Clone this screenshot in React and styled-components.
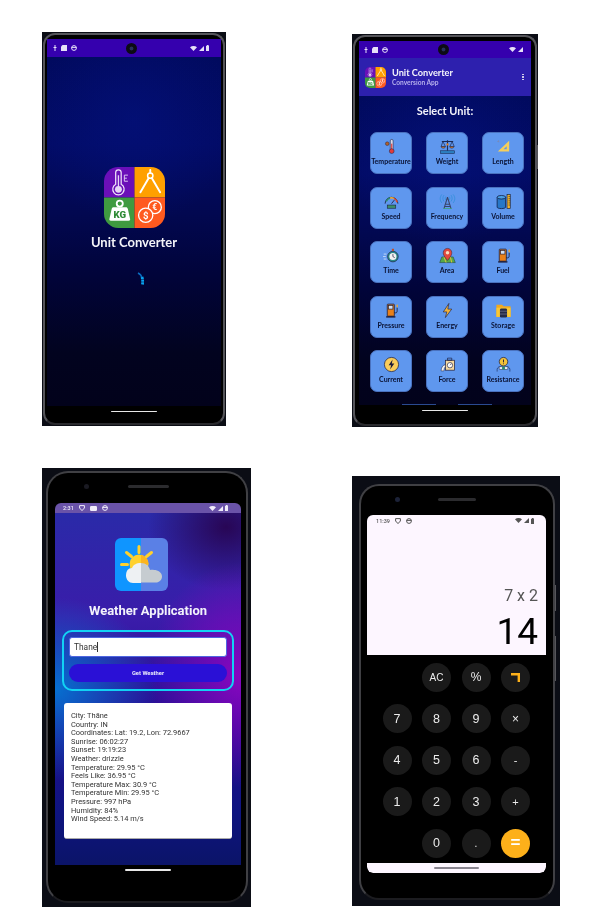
import React from 'react';
import styled, { createGlobalStyle } from 'styled-components';

const Global = createGlobalStyle`
  html, body { margin: 0; padding: 0; background: #fff; }
  * { box-sizing: border-box; }
`;

const Page = styled.main`
  width: 609px;
  height: 921px;
  overflow: hidden;
  display: grid;
  grid-template-columns: 310px 208px;
  grid-template-rows: 394px 439px;
  row-gap: 42px;
  padding: 32px 0 0 42px;
  align-items: start;
`;

const Shot = styled.section`
  width: ${p => p.$w}px;
  height: ${p => p.$h}px;
  margin-top: ${p => p.$top || 0}px;
  padding: ${p => p.$pad};
  background: #0b0d15;
  filter: blur(0.4px);
`;

const Bezel = styled.div`
  position: relative;
  height: 100%;
  background: #000;
  border: 2px solid ${p => p.$edge};
  border-bottom-color: ${p => p.$foot};
  border-radius: ${p => p.$radius}px;
  padding: ${p => p.$inner};
  display: flex;
  flex-direction: column;
`;

const SideKey = styled.span`
  position: absolute;
  right: -3px;
  top: ${p => p.$y}px;
  width: 1px;
  height: ${p => p.$h}px;
  background: #55555a;
`;

const Screen = styled.div`
  flex: 1;
  min-height: 0;
  display: flex;
  flex-direction: column;
  border-radius: ${p => p.$radius || 0}px;
  overflow: hidden;
`;

const Status = styled.div`
  flex: none;
  height: ${p => p.$h}px;
  background: ${p => p.$bg};
  color: ${p => p.$fg};
  padding: 0 ${p => p.$right}px 0 ${p => p.$left}px;
  display: flex;
  align-items: center;
  font: 500 5.5px Roboto, sans-serif;
`;

const StatusGroup = styled.div`
  flex: 1;
  display: flex;
  align-items: center;
  gap: ${p => p.$gap || 4}px;
  justify-content: ${p => (p.$end ? 'flex-end' : 'flex-start')};
`;

const PunchHole = styled.span`
  flex: none;
  width: 11px;
  height: 11px;
  border-radius: 50%;
  background: radial-gradient(circle, #27305c 0 18%, #0b0b14 30% 100%);
`;

const Nav = styled.div`
  flex: none;
  height: ${p => p.$h}px;
  background: ${p => p.$bg || '#000'};
  display: flex;
  justify-content: center;
  align-items: center;
`;

const HomeBar = styled.span`
  width: ${p => p.$w}px;
  height: 1.5px;
  border-radius: 1px;
  background: ${p => p.$color || '#e8e8e8'};
`;

const NightBg = styled.div`
  flex: 1;
  min-height: 0;
  display: flex;
  flex-direction: column;
  background:
    radial-gradient(ellipse 60% 30% at 50% 18%, #04128090, transparent),
    linear-gradient(180deg, #010a5e 0%, #020b66 25%, #020850 45%, #01043a 62%, #02031f 85%, #02021b 100%);
`;

const Splash = styled(NightBg)`
  align-items: center;
  padding-top: 110px;
`;

const SplashTitle = styled.h1`
  margin: 6px 0 0;
  font: 700 13px/16px Lato, sans-serif;
  color: #f4f4f8;
`;

const Spinner = styled.svg`
  margin: 22px 0 0 14px;
`;

const AppBar = styled.header`
  flex: none;
  height: 38px;
  background: #2d20ae;
  padding: 0 7px 0 6px;
  display: flex;
  align-items: center;
  gap: 6px;
`;

const BarTitles = styled.div`
  flex: 1;
  display: flex;
  flex-direction: column;
`;

const BarTitle = styled.span`
  font: 700 9.2px/11px Lato, sans-serif;
  color: #f5f5fb;
`;

const BarSub = styled.span`
  font: 700 6.6px/9px Lato, sans-serif;
  color: #b6b0ec;
`;

const Dots = styled.span`
  display: flex;
  flex-direction: column;
  gap: 1px;
  & > i { width: 1.6px; height: 1.6px; border-radius: 50%; background: #e8e8f4; display: block; }
`;

const SelectTitle = styled.h2`
  margin: 8px 0 14px;
  text-align: center;
  font: 700 11px/14px Lato, sans-serif;
  color: #f4f4fb;
`;

const UnitGrid = styled.div`
  display: grid;
  grid-template-columns: repeat(3, 42px);
  grid-auto-rows: 42px;
  column-gap: 14px;
  row-gap: 12.5px;
  padding-left: 11px;
`;

const UnitCard = styled.div`
  background: #5f97ee;
  border: 1px solid #4a72bf;
  border-radius: 7px;
  padding-top: 5px;
  display: flex;
  flex-direction: column;
  align-items: center;
`;

const UnitLabel = styled.span`
  margin-top: 2px;
  font: 700 7px/8px Lato, sans-serif;
  color: #0a1233;
  white-space: nowrap;
`;

const Peeks = styled.div`
  margin-top: 12px;
  padding-left: 43px;
  display: flex;
  gap: 22px;
  & > i { display: block; width: 34px; height: 1px; background: #2a4a90; }
`;

const Head = styled.div`
  flex: none;
  height: ${p => p.$h}px;
  display: flex;
  align-items: center;
  padding-bottom: ${p => p.$drop}px;
  padding-left: ${p => p.$left}px;
`;

const Lens = styled.span`
  width: 5px;
  height: 5px;
  border-radius: 50%;
  background: ${p => p.$color};
`;

const Speaker = styled.span`
  margin-left: ${p => p.$gap}px;
  width: ${p => p.$w}px;
  height: 3px;
  border-radius: 1.5px;
  background: #2b2b2e;
`;

const WeatherBg = styled.div`
  flex: 1;
  min-height: 0;
  display: flex;
  flex-direction: column;
  align-items: center;
  padding-top: 25px;
  background:
    radial-gradient(ellipse 55% 26% at 0% 50%, #0670d0 0%, #0670d000 100%),
    radial-gradient(ellipse 50% 32% at 100% 46%, #8a05c0 0%, #8a05c000 100%),
    radial-gradient(ellipse 42% 18% at 92% 4%, #280655 0%, #28065500 100%),
    linear-gradient(180deg, #2a2aa8 0%, #3a1caa 30%, #240c90 60%, #0e1480 85%, #0b1468 100%);
`;

const WeatherIcon = styled.svg`
  align-self: flex-start;
  margin-left: 60px;
`;

const WeatherTitle = styled.h1`
  margin: 12px 0 11px;
  font: 700 13px/16px Roboto, sans-serif;
  color: #f2f2fb;
`;

const SearchBox = styled.div`
  width: 172px;
  height: 61px;
  border: 2px solid #12d2f4;
  border-radius: 10px;
  padding: 5px 5px 0;
  display: flex;
  flex-direction: column;
  gap: 7px;
`;

const CityInput = styled.div`
  height: 20px;
  background: #fff;
  border: 1px solid #4f66e0;
  border-radius: 3px;
  padding-left: 4px;
  display: flex;
  align-items: center;
  font: 400 8.4px Roboto, sans-serif;
  color: #333;
`;

const Caret = styled.span`
  width: 0.7px;
  height: 10px;
  background: #333;
`;

const WeatherButton = styled.div`
  height: 18px;
  background: #2a10d6;
  border-radius: 9px;
  display: flex;
  align-items: center;
  justify-content: center;
  font: 700 5.8px Roboto, sans-serif;
  color: #e8e8fb;
`;

const ResultCard = styled.div`
  width: 168px;
  height: 136px;
  margin-top: 12px;
  background: #fff;
  border-radius: 3px;
  border-bottom: 1px solid #aaa;
  padding: 9px 7px;
  font: 400 7.45px/8.6px Roboto, sans-serif;
  color: #333;
`;

const ResultLine = styled.div`
  white-space: nowrap;
`;

const Display = styled.div`
  flex: none;
  height: 140px;
  background: #fdf6ff;
  display: flex;
  flex-direction: column;
`;

const DisplayBody = styled.div`
  flex: 1;
  display: flex;
  flex-direction: column;
  justify-content: flex-end;
  align-items: flex-end;
  padding: 0 8px 5px 0;
  font-family: Roboto, sans-serif;
`;

const Expression = styled.div`
  font-size: 16px;
  line-height: 18px;
  color: #555;
`;

const Result = styled.div`
  margin-top: 8px;
  font-size: 37px;
  line-height: 37px;
  color: #000;
`;

const Keypad = styled.div`
  flex: none;
  height: 208px;
  background: #000;
  padding: 7.5px 0 0 15.5px;
  display: grid;
  grid-template-columns: repeat(4, 29px);
  grid-auto-rows: 29px;
  column-gap: 10.5px;
  row-gap: 12.5px;
`;

const Key = styled.div`
  grid-column: ${p => p.$col || 'auto'};
  border-radius: 50%;
  background: ${p => (p.$accent ? '#fdb01a' : '#1a1a1a')};
  color: ${p => (p.$accent ? '#fff' : '#ececec')};
  display: flex;
  align-items: center;
  justify-content: center;
  font: ${p => (p.$bold ? 700 : 400)} ${p => p.$size || 12.5}px "Liberation Sans", sans-serif;
`;

const CalcNav = styled(Nav)`
  border-radius: 0 0 6px 6px;
`;

/* ---------- drawings ---------- */

const AppIcon = ({ size }) => (
  <svg width={size} height={size} viewBox="0 0 60 60">
    <defs>
      <clipPath id={`app${size}`}><rect width="60" height="60" rx="14" /></clipPath>
    </defs>
    <g clipPath={`url(#app${size})`}>
      <rect width="30" height="30" fill="#6a0fb8" />
      <rect x="30" width="30" height="30" fill="#ffa000" />
      <rect y="30" width="30" height="30" fill="#3f9a40" />
      <rect x="30" y="30" width="30" height="30" fill="#ff5a1f" />
      <path d="M11.5 5.5a2.7 2.7 0 0 1 5.4 0v11.5a5.6 5.6 0 1 1-5.4 0z" fill="none" stroke="#f0e6fa" strokeWidth="1.2" />
      <circle cx="14.2" cy="22" r="3.4" fill="#e6d6f6" />
      <path d="M14.2 8v12" stroke="#e6d6f6" strokeWidth="1.3" />
      <path d="M20 8h3.5M20 11h2.5M20 14h3.5M20 8v6" stroke="#e6d6f6" strokeWidth=".9" fill="none" />
      <circle cx="45.5" cy="8.5" r="2.6" fill="none" stroke="#fff" strokeWidth="1.5" />
      <path d="M45.5 3v3M44 10.8l-8.2 14M47 10.8l8.2 14" stroke="#fff" strokeWidth="1.9" strokeLinecap="round" />
      <circle cx="15.5" cy="36" r="3" fill="none" stroke="#fff" strokeWidth="1.8" />
      <path d="M9.5 39.5h12c1.2 0 1.6.6 1.9 1.6l2.3 10c.2 1-.3 1.7-1.4 1.7H6.7c-1.1 0-1.6-.7-1.4-1.7l2.3-10c.3-1 .7-1.6 1.9-1.6z" fill="#fff" />
      <text x="15.5" y="50" textAnchor="middle" fontFamily="Roboto, sans-serif" fontWeight="900" fontSize="9.5" fill="#2d8a34">KG</text>
      <circle cx="50" cy="39.5" r="6.4" fill="#ff5a1f" stroke="#fff" strokeWidth="1.3" />
      <text x="50" y="42.6" textAnchor="middle" fontFamily="Roboto, sans-serif" fontWeight="700" fontSize="8.5" fill="#fff">€</text>
      <circle cx="41" cy="47.5" r="7" fill="#ff5a1f" stroke="#fff" strokeWidth="1.3" />
      <text x="41" y="51" textAnchor="middle" fontFamily="Roboto, sans-serif" fontWeight="700" fontSize="9.5" fill="#fff">$</text>
    </g>
  </svg>
);

const StatusMarks = {
  bolt: <svg width="4" height="6" viewBox="0 0 4 6"><path d="M2 0v6M.5 2.5h3" stroke="currentColor" strokeWidth="1" /></svg>,
  card: <svg width="6" height="6" viewBox="0 0 6 6"><path d="M1.5 0H6v6H0V1.5z" fill="currentColor" /></svg>,
  ring: <svg width="6" height="6" viewBox="0 0 6 6"><circle cx="3" cy="3" r="2.4" fill="none" stroke="currentColor" strokeWidth="1" /><path d="M.6 2.4h4.8" stroke="currentColor" /></svg>,
  shield: <svg width="6" height="6" viewBox="0 0 6 6"><path d="M.6.6h4.8v2.4L3 5.6.6 3z" fill="none" stroke="currentColor" strokeWidth="1" /></svg>,
  video: <svg width="7" height="5" viewBox="0 0 7 5"><rect width="7" height="5" rx="1.2" fill="currentColor" /></svg>,
  wifi: <svg width="7" height="5" viewBox="0 0 7 5"><path d="M0 1.2C2 -.4 5 -.4 7 1.2L3.5 5z" fill="currentColor" /></svg>,
  signal: <svg width="5" height="5" viewBox="0 0 5 5"><path d="M5 0v5H0z" fill="currentColor" /></svg>,
  battery: <svg width="3.5" height="6" viewBox="0 0 3.5 6"><path d="M1 0h1.5v.7h1V6H0V.7h1z" fill="currentColor" /></svg>,
};

const Marks = ({ names, ...rest }) => (
  <StatusGroup {...rest}>
    {names.map((n, i) => <React.Fragment key={i}>{StatusMarks[n]}</React.Fragment>)}
  </StatusGroup>
);

const I = ({ children }) => <svg width="17" height="17" viewBox="0 0 24 24">{children}</svg>;

const pump = (
  <>
    <rect x="6" y="3" width="10" height="17" rx="1" fill="#e8801a" stroke="#1b1b3a" strokeWidth="1.1" />
    <rect x="8" y="5" width="6" height="5" fill="#cfe0f5" stroke="#1b1b3a" strokeWidth=".9" />
    <rect x="4.5" y="20" width="13" height="2" fill="#1b1b3a" />
    <path d="M16 15c3 1 4 0 4-3V8" fill="none" stroke="#1b1b3a" strokeWidth="1.2" />
    <path d="M20 3c1.4 1.6 1.6 3 0 5-1.6-2-1.4-3.4 0-5z" fill="#f2a92a" />
  </>
);

const units = [
  ['Temperature', <I key="t">
    <circle cx="6" cy="8" r="2.6" fill="#b0602a" stroke="#1b1b3a" strokeWidth=".6" />
    <rect x="10.3" y="2" width="4" height="15" rx="2" fill="#d8dcec" stroke="#1b1b3a" strokeWidth=".8" />
    <rect x="11.5" y="8" width="1.6" height="10" fill="#e23b3b" />
    <circle cx="12.3" cy="18.5" r="3.4" fill="#e23b3b" stroke="#1b1b3a" strokeWidth=".7" />
  </I>],
  ['Weight', <I key="w">
    <path d="M12 3v15M4 5h16" stroke="#1b2a55" strokeWidth="1.6" />
    <path d="M5.5 5 3 12h6zM18.5 5 15.5 12h6z" fill="none" stroke="#1b2a55" strokeWidth="1" />
    <path d="M3 12a3 2.5 0 0 0 6 0zM15 12a3 2.5 0 0 0 6 0z" fill="#c8732c" stroke="#1b2a55" strokeWidth=".7" />
    <circle cx="12" cy="9" r="1.6" fill="#e8801a" />
    <rect x="2" y="18" width="20" height="4" fill="#2d7fc0" stroke="#1b2a55" strokeWidth=".8" />
  </I>],
  ['Length', <I key="l">
    <path d="M20 4v15H4z" fill="#f5cf5c" />
    <path d="M16.5 11.5v4.5h-4.5z" fill="#5f97ee" />
    <path d="M3 5h3M5 3v3" stroke="#7a8ab5" strokeWidth="1" />
  </I>],
  ['Speed', <I key="s">
    <path d="M3 15a9 9 0 0 1 18 0" fill="none" stroke="#1b1b3a" strokeWidth="1.2" />
    <path d="M4.5 12A8 8 0 0 1 10 7" fill="none" stroke="#2b8a6c" strokeWidth="2.2" />
    <path d="M10 7a8 8 0 0 1 5.5 .6" fill="none" stroke="#f2a92a" strokeWidth="2.2" />
    <path d="M15.5 7.6A8 8 0 0 1 20 13" fill="none" stroke="#d9482e" strokeWidth="2.2" />
    <path d="M12 15l4-5" stroke="#1b1b3a" strokeWidth="1.2" />
    <rect x="6" y="17" width="12" height="4.5" fill="#3b8f6a" stroke="#1b1b3a" strokeWidth=".8" />
  </I>],
  ['Frequency', <I key="f">
    <path d="M12 6 7 22M12 6l5 16M9 16h6M8 19h8" fill="none" stroke="#3a4468" strokeWidth="1.5" />
    <path d="M7 3c-2 3-2 6 0 9M17 3c2 3 2 6 0 9M9.5 5c-1 2-1 3 0 5M14.5 5c1 2 1 3 0 5M4 2c-3 4-3 8 0 12M20 2c3 4 3 8 0 12" fill="none" stroke="#2e8fd8" strokeWidth="1.1" />
    <rect x="6" y="21.5" width="12" height="1" fill="#3ba86a" />
  </I>],
  ['Volume', <I key="v">
    <path d="M3 6v14c0 1 2.5 2 6 2s6-1 6-2V6z" fill="#2777c8" stroke="#0e1b40" strokeWidth="1.1" />
    <ellipse cx="9" cy="6" rx="6" ry="2.5" fill="#4aa0e6" stroke="#0e1b40" strokeWidth="1.1" />
    <rect x="17" y="2" width="4.5" height="20" fill="#f2b42a" stroke="#0e1b40" strokeWidth=".9" />
    <path d="M19 5h2.5M19 8h2.5M19 11h2.5M19 14h2.5M19 17h2.5" stroke="#0e1b40" strokeWidth=".7" />
  </I>],
  ['Time', <I key="ti">
    <circle cx="14" cy="13.5" r="7.5" fill="#2b8a8a" stroke="#1b1b3a" strokeWidth=".9" />
    <circle cx="14" cy="13.5" r="5" fill="#f2f2f2" />
    <path d="M14 10v3.5l2.5 1.5" fill="none" stroke="#1b1b3a" strokeWidth="1" />
    <rect x="12.5" y="2.5" width="3" height="3" fill="#c0502a" />
    <path d="M1 10h4M0 13.5h4M1 17h4" stroke="#e8f0fa" strokeWidth="1" />
  </I>],
  ['Area', <I key="a">
    <path d="M1 22l3-8h16l3 8z" fill="#55a84a" stroke="#1f3a2a" strokeWidth=".7" />
    <path d="M7 14l3 8M16 14l2 8" stroke="#e8c23a" strokeWidth="1.3" />
    <path d="M12 19C7 13 6 11 6 8a6 6 0 0 1 12 0c0 3-1 5-6 11z" fill="#e2483e" stroke="#3a1a2a" strokeWidth=".7" />
    <circle cx="12" cy="8" r="2.5" fill="#f5dfc0" />
  </I>],
  ['Fuel', <I key="fu">{pump}</I>],
  ['Pressure', <I key="p">{pump}</I>],
  ['Energy', <I key="e">
    <path d="M14 2 6 14h5l-2 8 9-12h-5.5z" fill="#f2b23a" stroke="#2a2a4a" strokeWidth="1" strokeLinejoin="round" />
  </I>],
  ['Storage', <I key="st">
    <path d="M2 4h8l2 2h10v15H2z" fill="#f2a91e" />
    <rect x="2" y="8" width="20" height="13" fill="#f9c734" />
    <rect x="7" y="9" width="10" height="13" rx="2" fill="#252a45" />
    <path d="M7 13h10M7 17h10" stroke="#7a80a0" strokeWidth=".9" />
  </I>],
  ['Current', <I key="c">
    <circle cx="12" cy="12" r="10" fill="#f9cc5a" stroke="#1b1b3a" strokeWidth="1" />
    <path d="M13.5 5 8 13h3.5L10 19l6-8.5h-3.5z" fill="#1b1b3a" />
  </I>],
  ['Force', <I key="fo">
    <rect x="9" y="6" width="13" height="14" fill="#f5d9a0" stroke="#1b1b3a" strokeWidth="1" />
    <circle cx="15.5" cy="13" r="3.8" fill="#fff" stroke="#1b1b3a" strokeWidth=".9" />
    <path d="M15.5 13l2-2M12 3h6v3h-6z" stroke="#1b1b3a" strokeWidth=".9" fill="none" />
    <path d="M3 21c0-4 2-8 6-9v3c-1 1-2 3-2 6z" fill="#f2f2f2" stroke="#1b1b3a" strokeWidth=".7" />
  </I>],
  ['Resistance', <I key="r">
    <circle cx="12" cy="8" r="6" fill="#f2c23a" stroke="#1b1b3a" strokeWidth="1" />
    <path d="M12 5v4M12 10.5v1" stroke="#1b1b3a" strokeWidth="1.3" />
    <path d="M3 22v-3c0-3 3-4 5-4M21 22v-3c0-3-3-4-5-4" fill="none" stroke="#1b2a55" strokeWidth=".9" />
    <rect x="6" y="15" width="12" height="4" rx="1" fill="#eef2f8" stroke="#1b2a55" strokeWidth=".8" />
    <rect x="10" y="15" width="4" height="4" fill="#2b8a6c" />
  </I>],
];

const keys = [
  { t: 'AC', col: 2, size: 10 }, { t: '%', size: 12 }, { t: 'back' },
  { t: '7' }, { t: '8' }, { t: '9' }, { t: '×', size: 12 },
  { t: '4' }, { t: '5' }, { t: '6' }, { t: '-', size: 11 },
  { t: '1' }, { t: '2' }, { t: '3' }, { t: '+', size: 11 },
  { t: '0', col: 2 }, { t: '.', size: 10 }, { t: '=', accent: true, size: 17, bold: true },
];

const weather = [
  'City: Thāne', 'Country: IN', 'Coordinates: Lat: 19.2, Lon: 72.9667', 'Sunrise: 06:02:27',
  'Sunset: 19:19:23', 'Weather: drizzle', 'Temperature: 29.95 °C', 'Feels Like: 36.95 °C',
  'Temperature Max: 30.9 °C', 'Temperature Min: 29.95 °C', 'Pressure: 997 hPa', 'Humidity: 84%',
  'Wind Speed: 5.14 m/s',
];

export default function App() {
  return (
    <Page>
      <Global />

      <Shot $w={184} $h={394} $pad="1px">
        <Bezel $edge="#55555a" $foot="#2a2a2e" $radius={12} $inner="4px 2px 6px">
          <Screen>
            <Status $h={18} $bg="#3500ae" $fg="#e6e0f8" $left={6} $right={12}>
              <Marks names={['bolt', 'card', 'ring']} />
              <PunchHole />
              <Marks $end names={['wifi', 'signal', 'battery']} $gap={2} />
            </Status>
            <Splash>
              <AppIcon size={61} />
              <SplashTitle>Unit Converter</SplashTitle>
              <Spinner width="8" height="14" viewBox="0 0 8 14">
                <path d="M1 1c2 1 3.5 2.5 4 5" fill="none" stroke="#0a6cc0" strokeWidth="1.5" />
                <path d="M5 5c.8 2.5.8 5 .4 8" fill="none" stroke="#08a4f0" strokeWidth="2.8" strokeDasharray="2.2 .5" />
              </Spinner>
            </Splash>
            <Nav $h={11}><HomeBar $w={46} /></Nav>
          </Screen>
        </Bezel>
      </Shot>

      <Shot $w={186} $h={393} $top={2} $pad="1px">
        <Bezel $edge="#55555a" $foot="#2a2a2e" $radius={12} $inner="4px 4px 8px">
          <SideKey $y={108} $h={24} />
          <Screen>
            <Status $h={17} $bg="#3500ae" $fg="#e6e0f8" $left={5} $right={8}>
              <Marks names={['bolt', 'card', 'ring']} />
              <PunchHole />
              <Marks $end names={['wifi', 'signal']} $gap={2} />
            </Status>
            <AppBar>
              <AppIcon size={21} />
              <BarTitles>
                <BarTitle>Unit Converter</BarTitle>
                <BarSub>Conversion App</BarSub>
              </BarTitles>
              <Dots><i /><i /><i /></Dots>
            </AppBar>
            <NightBg>
              <SelectTitle>Select Unit:</SelectTitle>
              <UnitGrid>
                {units.map(([label, icon]) => (
                  <UnitCard key={label}>
                    {icon}
                    <UnitLabel>{label}</UnitLabel>
                  </UnitCard>
                ))}
              </UnitGrid>
              <Peeks><i /><i /></Peeks>
            </NightBg>
            <Nav $h={11}><HomeBar $w={46} /></Nav>
          </Screen>
        </Bezel>
      </Shot>

      <Shot $w={209} $h={439} $pad="3px 3px 4px 4px">
        <Bezel $edge="#404044" $foot="#1c1c20" $radius={22} $inner="0 5px 26px 7px">
          <Head $h={30} $drop={4} $left={29}>
            <Lens $color="#1a1a22" />
            <Speaker $gap={39} $w={41} />
          </Head>
          <Screen $radius={6}>
            <Status $h={10} $bg="#6a53a8" $fg="#f0ecfa" $left={8} $right={13}>
              <StatusGroup $gap={5}>
                <span>2:31</span>
                {StatusMarks.shield}
                {StatusMarks.video}
                {StatusMarks.ring}
              </StatusGroup>
              <Marks $end names={['wifi', 'signal', 'battery']} $gap={2} />
            </Status>
            <WeatherBg>
              <WeatherIcon width="53" height="53" viewBox="0 0 53 53">
                <path d="M6 0h20v53H6a6 6 0 0 1-6-6V6a6 6 0 0 1 6-6z" fill="#0f95ff" />
                <path d="M26 0h21a6 6 0 0 1 6 6v41a6 6 0 0 1-6 6H26z" fill="#5a80e6" />
                <circle cx="24" cy="26" r="9.5" fill="#ffd12e" />
                <path d="M26 16.7a9.5 9.5 0 0 1 7.5 9.3L26 30z" fill="#fcb51f" />
                <path d="M24 8.5v6M11.5 14.5l5 4M36.5 14.5l-5 4M6.5 26.5h6" stroke="#ffd12e" strokeWidth="3" strokeLinecap="round" />
                <path d="M26 25c-5 0-8 2-9 5-4 0-6 3-6 7.500 0 4 3 7.500 7 7.500h8z" fill="#eef1f3" />
                <path d="M26 25c5 0 8 3 9 7 1-.5 3-.5 4 0 4 0 8 2.500 8 6.500 0 3.500-3 6-6 6H26z" fill="#c6ccd0" />
              </WeatherIcon>
              <WeatherTitle>Weather Application</WeatherTitle>
              <SearchBox>
                <CityInput>Thane<Caret /></CityInput>
                <WeatherButton>Get Weather</WeatherButton>
              </SearchBox>
              <ResultCard>
                {weather.map(line => <ResultLine key={line}>{line}</ResultLine>)}
              </ResultCard>
            </WeatherBg>
            <Nav $h={10}><HomeBar $w={46} /></Nav>
          </Screen>
        </Bezel>
      </Shot>

      <Shot $w={208} $h={430} $top={8} $pad="8px 5px 6px 7px">
        <Bezel $edge="#404044" $foot="#1c1c20" $radius={20} $inner="0 7px 25px 6px">
          <SideKey $y={99} $h={26} />
          <SideKey $y={150} $h={45} />
          <Head $h={29} $drop={3} $left={28}>
            <Lens $color="#1c2238" />
            <Speaker $gap={38} $w={38} />
          </Head>
          <Screen $radius={6}>
            <Display>
              <Status $h={11} $bg="transparent" $fg="#555" $left={9} $right={12}>
                <StatusGroup $gap={5}>
                  <span>11:39</span>
                  {StatusMarks.shield}
                  {StatusMarks.ring}
                </StatusGroup>
                <Marks $end names={['wifi', 'signal', 'battery']} $gap={2} />
              </Status>
              <DisplayBody>
                <Expression>7 x 2</Expression>
                <Result>14</Result>
              </DisplayBody>
            </Display>
            <Keypad>
              {keys.map(k => (
                <Key key={k.t} $col={k.col} $size={k.size} $bold={k.bold} $accent={k.accent}>
                  {k.t === 'back'
                    ? <svg width="9" height="9" viewBox="0 0 9 9"><path d="M0 1.2h7.8V9" fill="none" stroke="#fdb01a" strokeWidth="2.4" /></svg>
                    : k.t}
                </Key>
              ))}
            </Keypad>
            <CalcNav $h={10} $bg="#fdf6ff"><HomeBar $w={45} $color="#8a8590" /></CalcNav>
          </Screen>
        </Bezel>
      </Shot>
    </Page>
  );
}
